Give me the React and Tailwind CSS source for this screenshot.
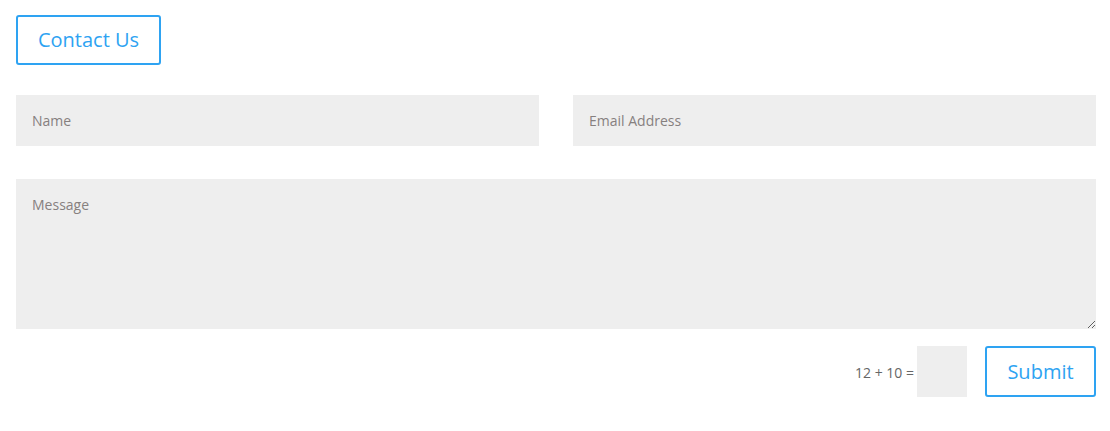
import React from "react";

export default function App() {
    const font = { fontFamily: "'Open Sans', 'Liberation Sans', sans-serif" };
    return (
        <div className="w-[1110px] h-[431px] bg-white pl-4 pr-[14px] pt-[15px]" style={font}>
            <button className="h-[50px] w-[145px] border-2 border-[#2ea3f2] rounded-[3px] text-[20px] text-[#2ea3f2] bg-white">
                Contact Us
            </button>

            <form className="mt-[30px]" onSubmit={(e) => e.preventDefault()}>
                <div className="flex gap-[34px]">
                    <input
                        type="text"
                        placeholder="Name"
                        className="flex-1 min-w-0 h-[51px] bg-[#eeeeee] px-4 text-[14px] text-[#999] placeholder:text-[#86807f] outline-none"
                    />
                    <input
                        type="text"
                        placeholder="Email Address"
                        className="flex-1 min-w-0 h-[51px] bg-[#eeeeee] px-4 text-[14px] text-[#999] placeholder:text-[#86807f] outline-none"
                    />
                </div>

                <textarea
                    placeholder="Message"
                    className="block w-full h-[150px] mt-[33px] bg-[#eeeeee] px-4 pt-[15px] pb-4 text-[14px] text-[#999] placeholder:text-[#86807f] outline-none"
                />

                <div className="flex items-center justify-end mt-[17px]">
                    <span className="text-[14px] text-[#666] mr-[3px] mt-[2px]">12 + 10 =</span>
                    <input
                        type="text"
                        className="w-[50px] h-[51px] bg-[#eeeeee] outline-none"
                    />
                    <button
                        type="submit"
                        className="ml-[18px] h-[51px] w-[111px] border-2 border-[#2ea3f2] rounded-[3px] text-[20px] text-[#2ea3f2] bg-white"
                    >
                        Submit
                    </button>
                </div>
            </form>
        </div>
    );
}
